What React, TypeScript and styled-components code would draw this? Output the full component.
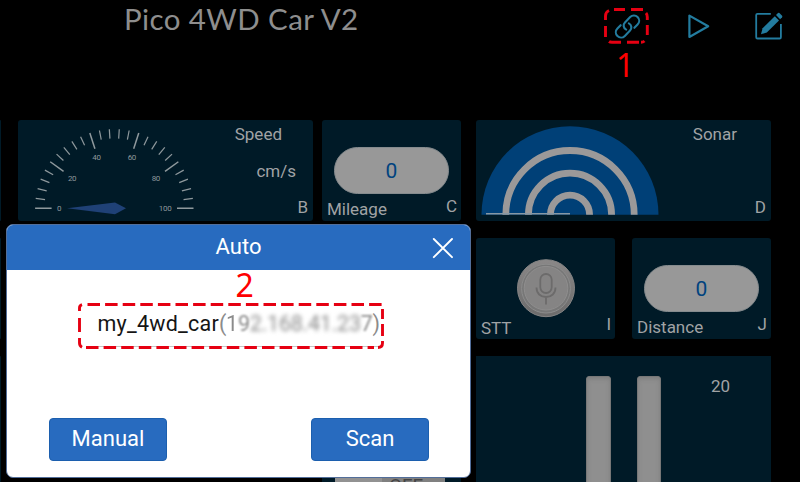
import React from "react";
import styled, { createGlobalStyle } from "styled-components";

const GlobalStyle = createGlobalStyle`
  html, body { margin: 0; background: #000; }
  * { box-sizing: border-box; }
`;

const Screen = styled.div`
  position: relative;
  width: 800px;
  height: 482px;
  overflow: hidden;
  background: #000;
  color: #a0a3a5;
  font-family: Roboto, "Liberation Sans", sans-serif;
`;

const Header = styled.header`
  display: flex;
  align-items: flex-start;
  height: 120px;
  padding-left: 124px;
`;

const Title = styled.h1`
  margin: 0;
  width: 481px;
  font: 400 29.5px/38px Lato, sans-serif;
  letter-spacing: 0.4px;
  color: #8e8e8e;
`;

const Toolbar = styled.nav`
  display: flex;
  align-items: center;
  height: 52px;
`;

const ToolButton = styled.button<{ $gap?: number }>`
  display: flex;
  align-items: center;
  justify-content: center;
  width: 44px;
  height: 44px;
  margin: 0 0 0 ${(p) => p.$gap ?? 0}px;
  padding: 0;
  border: 0;
  background: none;
  color: #237c9f;
`;

const Dashboard = styled.main`
  display: flex;
  height: 362px;
`;

const Column = styled.section<{ $width: number; $gap?: number }>`
  display: flex;
  flex-direction: column;
  gap: 17px;
  flex: none;
  width: ${(p) => p.$width}px;
  margin-left: ${(p) => p.$gap ?? 0}px;
`;

const Row = styled.div`
  display: flex;
  gap: 17px;
`;

const Card = styled.article<{ $height?: number; $square?: boolean; $width?: number }>`
  display: flex;
  flex: none;
  width: ${(p) => (p.$width ? `${p.$width}px` : "100%")};
  height: ${(p) => p.$height ?? 101}px;
  border-radius: ${(p) => (p.$square ? 0 : 3)}px;
  background: #001a27;
  overflow: hidden;
`;

const EdgeCard = styled(Card)`
  border-radius: 0 2px 2px 0;
`;

const Spacer = styled.div`
  height: 101px;
`;

const StackCard = styled(Card)`
  flex-direction: column;
  justify-content: space-between;
`;

const Side = styled.div`
  display: flex;
  flex: 1;
  flex-direction: column;
  align-items: flex-end;
  justify-content: space-between;
  padding: 4px 5px 4px 0;
`;

const Label = styled.span<{ $right?: number; $drop?: number }>`
  font-size: 17px;
  line-height: 20px;
  margin-right: ${(p) => p.$right ?? 0}px;
  margin-top: ${(p) => p.$drop ?? 0}px;
`;

const CardFooter = styled.footer`
  display: flex;
  justify-content: space-between;
  height: 24px;
  padding: 0 4px 0 5px;
`;

const Pill = styled.div`
  display: flex;
  align-items: center;
  justify-content: center;
  width: 115px;
  height: 47px;
  margin: 27px 0 0 12px;
  border: 1px solid #858b8e;
  border-radius: 24px;
  background: #989898;
  color: #00437f;
  font-size: 21px;
`;

const KnobSlot = styled.div`
  display: flex;
  justify-content: center;
  height: 77px;
  padding-top: 20px;
`;

const Tracks = styled.div`
  display: flex;
  gap: 26px;
  padding: 20px 0 0 110px;
`;

const Track = styled.div`
  width: 24.5px;
  height: 140px;
  border: 1px solid #777;
  border-radius: 3px;
  background: #8f8f8f;
  box-shadow: inset 0 2px 4px #7e7e7e;
`;

const TrackValue = styled.span`
  margin: 19px 0 0 50px;
  font-size: 17px;
  line-height: 22px;
`;

const Toggle = styled.div`
  align-self: flex-end;
  display: flex;
  justify-content: flex-end;
  width: 110px;
  height: 14px;
  margin: 0 0 -8px 13px;
  padding-right: 22px;
  background: linear-gradient(90deg, #929292 43%, #808080 43%);
  color: #444;
  font-size: 19px;
  line-height: 19px;
`;

const Dialog = styled.div`
  position: absolute;
  left: 6px;
  top: 224px;
  display: flex;
  flex-direction: column;
  width: 465px;
  height: 254px;
  border: 1px solid #526e9a;
  border-radius: 7px;
  background: #fff;
  overflow: hidden;
`;

const DialogHeader = styled.div`
  display: grid;
  grid-template-columns: 54px 1fr 54px;
  align-items: center;
  justify-items: center;
  flex: none;
  height: 45px;
  background: #286bbf;
  color: #fff;
`;

const DialogTitle = styled.h2`
  grid-column: 2;
  margin: 0;
  text-align: center;
  font-size: 22px;
  font-weight: 400;
  line-height: 42px;
  padding-bottom: 2px;
`;

const Device = styled.div`
  display: flex;
  height: 36px;
  margin: 41px 87px 0 85px;
  padding-left: 5.5px;
  border-bottom: 1px solid #c4c4c4;
  color: #151515;
  font-size: 21.5px;
  line-height: 26px;
  white-space: pre;
`;

const DeviceName = styled.span`
  width: 121.5px;
  letter-spacing: 0.25px;
`;

const Address = styled.span`
  display: flex;
  color: #8b8b8b;
  letter-spacing: -0.25px;
`;

const Blurred = styled.span<{ $amount: number }>`
  filter: blur(${(p) => p.$amount}px);
`;

const Actions = styled.div`
  display: flex;
  justify-content: space-between;
  margin: auto 41px 16px 42px;
`;

const Action = styled.button`
  width: 118px;
  height: 43px;
  padding: 0 0 2px;
  border: 1px solid #1c5fae;
  border-radius: 4px;
  background: #286bbf;
  color: #fff;
  font: 400 22px Roboto, sans-serif;
`;

const Callouts = styled.svg`
  position: absolute;
  left: 0;
  top: 0;
  pointer-events: none;
`;

const CalloutNumber = styled.span<{ $x: number; $y: number }>`
  position: absolute;
  left: ${(p) => p.$x}px;
  top: ${(p) => p.$y}px;
  color: #f00;
  font: 400 32px/32px "Noto Sans", sans-serif;
`;

const ticks = Array.from({ length: 26 }, (_, i) => i);
const gaugeLabels: [string, number, number][] = [
  ["0", 41.3, 91.3], ["20", 54.2, 61.2], ["40", 78.6, 40.2],
  ["60", 114, 40.2], ["80", 138, 61.2], ["100", 147.2, 91.3],
];

const Gauge = () => (
  <svg width="190" height="101">
    {ticks.map((i) => {
      const a = (i * 7.2 * Math.PI) / 180;
      const inner = i % 5 === 0 ? 62.7 : 69.8;
      return (
        <line
          key={i}
          x1={96.3 - 79.2 * Math.cos(a)}
          y1={88.3 - 79.2 * Math.sin(a)}
          x2={96.3 - inner * Math.cos(a)}
          y2={88.3 - inner * Math.sin(a)}
          stroke="#8f999d"
          strokeWidth={i % 5 === 0 ? 1.5 : 1.2}
        />
      );
    })}
    <path d="M49 88.3 97 82.6 108 88.3 97 94.2Z" fill="#1f4176" />
    {gaugeLabels.map(([t, x, y]) => (
      <text key={t} x={x} y={y} fontSize="8" textAnchor="middle" fill="#8d979b" textLength={t.length * 4.3}>{t}</text>
    ))}
  </svg>
);

const Sonar = () => (
  <svg width="190" height="101">
    <path d="M5.5 94.7a88.5 88.5 0 0 1 177 0Z" fill="#004077" />
    {[64.2, 41.6, 19.6].map((r) => (
      <path key={r} d={`M${94 - r} 94.7a${r} ${r} 0 0 1 ${2 * r} 0`} fill="none" stroke="#9b9999" strokeWidth="6.8" />
    ))}
    <path d="M10 93.8H94" stroke="#8798a4" strokeWidth="1.6" />
  </svg>
);

const MicKnob = () => (
  <svg width="60" height="60">
    <defs>
      <linearGradient id="rim" x2="0" y2="1">
        <stop stopColor="#8a8888" />
        <stop offset="1" stopColor="#6c6b6b" />
      </linearGradient>
    </defs>
    <circle cx="30" cy="30.2" r="28.5" fill="url(#rim)" stroke="#858484" />
    <circle cx="30" cy="30.6" r="24.4" fill="#777" stroke="#8c8c8c" strokeWidth="1" />
    <circle cx="30" cy="30.2" r="21.8" fill="#858484" stroke="#8f8e8e" />
    <g fill="none" stroke="#6c6b6b" strokeWidth="1.8">
      <rect x="24.3" y="16" width="11.4" height="19" rx="5.7" />
      <path d="M20.5 29.5c0 6 4 9.5 9.5 9.5s9.5-3.5 9.5-9.5M30 39V46.5" />
    </g>
  </svg>
);

const LinkIcon = () => (
  <svg width="31" height="31" viewBox="0 0 28 28" fill="none" stroke="currentColor" strokeWidth="1.9" strokeLinecap="round">
    <path d="M15.2 11.2c2.6 1.3 3 4.6 1.1 6.5l-4.7 4.8c-1.9 1.9-4.8 2-6.7.1s-1.9-4.9 0-6.8l2.9-3" />
    <path d="M12.8 16.8c-2.6-1.3-3-4.6-1.1-6.5l4.7-4.8c1.9-1.9 4.8-2 6.7-.1s1.9 4.9 0 6.8l-2.9 3" />
  </svg>
);

const PlayIcon = () => (
  <svg width="24" height="28" viewBox="0 0 24 28" fill="none" stroke="currentColor" strokeWidth="2.2" strokeLinejoin="round">
    <path d="M2.4 3.6V25L21.2 14.3Z" />
  </svg>
);

const EditIcon = () => (
  <svg width="30" height="30" viewBox="0 0 30 30">
    <path d="M16.8 2.8H3.5Q2.2 2.8 2.2 4.1V26.2Q2.2 27.5 3.5 27.5H25.6Q26.9 27.5 26.9 26.2V13" fill="none" stroke="currentColor" strokeWidth="1.8" />
    <path d="M7 23.2 8.6 17.3 20.8 5.2 25 9.4 12.8 21.5Z" fill="currentColor" />
    <path d="M22 4 24 2.1Q24.7 1.5 25.4 2.1L28.1 4.8Q28.7 5.5 28.1 6.2L26.1 8.2Z" fill="currentColor" />
  </svg>
);

const CloseIcon = () => (
  <svg width="22" height="22" stroke="#fff" strokeWidth="1.9" strokeLinecap="round">
    <path d="M1.8 2 20 20.2M20 2 1.8 20.2" />
  </svg>
);

export default function App() {
  return (
    <Screen>
      <GlobalStyle />
      <Header>
        <Title>Pico 4WD Car V2</Title>
        <Toolbar>
          <ToolButton aria-label="Connect"><LinkIcon /></ToolButton>
          <ToolButton $gap={28} aria-label="Play"><PlayIcon /></ToolButton>
          <ToolButton $gap={26} aria-label="Edit"><EditIcon /></ToolButton>
        </Toolbar>
      </Header>

      <Dashboard>
        <Column $width={1}>
          <EdgeCard />
          <EdgeCard />
          <EdgeCard $height={126} />
        </Column>
        <Column $width={295} $gap={17}>
          <Card>
            <Gauge />
            <Side>
              <Label $right={26}>Speed</Label>
              <Label $right={12}>cm/s</Label>
              <Label>B</Label>
            </Side>
          </Card>
        </Column>
        <Column $width={139} $gap={9}>
          <StackCard>
            <Pill>0</Pill>
            <CardFooter><Label $drop={2}>Mileage</Label><Label $drop={-1}>C</Label></CardFooter>
          </StackCard>
          <Spacer />
          <Card $height={126} $square><Toggle>OFF</Toggle></Card>
        </Column>
        <Column $width={295} $gap={15}>
          <Card>
            <Sonar />
            <Side>
              <Label $right={29}>Sonar</Label>
              <Label>D</Label>
            </Side>
          </Card>
          <Row>
            <StackCard $width={139}>
              <KnobSlot><MicKnob /></KnobSlot>
              <CardFooter><Label $drop={3}>STT</Label><Label $drop={-1}>I</Label></CardFooter>
            </StackCard>
            <StackCard $width={139}>
              <Pill>0</Pill>
              <CardFooter><Label $drop={2}>Distance</Label><Label $drop={-1}>J</Label></CardFooter>
            </StackCard>
          </Row>
          <Card $height={126} $square>
            <Tracks><Track /><Track /></Tracks>
            <TrackValue>20</TrackValue>
          </Card>
        </Column>
      </Dashboard>

      <Dialog role="dialog">
        <DialogHeader>
          <DialogTitle>Auto</DialogTitle>
          <CloseIcon />
        </DialogHeader>
        <Device>
          <DeviceName>my_4wd_car</DeviceName>
          <Address>
            <span>(</span>
            <Blurred $amount={0.6}>1</Blurred>
            <Blurred $amount={1.1}>9</Blurred>
            <Blurred $amount={2}>2.168.41.23</Blurred>
            <Blurred $amount={0.8}>7</Blurred>
            <span>)</span>
          </Address>
        </Device>
        <Actions>
          <Action>Manual</Action>
          <Action>Scan</Action>
        </Actions>
      </Dialog>

      <Callouts width="800" height="482" fill="none" stroke="#e60012" strokeWidth="2.9">
        <path d="M614 9.5H625M631 9.5H643M646 13Q647.3 14.5 647.3 17V20M647.3 25V35M644.5 41Q643 42.3 641 42.3M639 42.3H627M621 42.3H612Q610 42.3 609 41.5M605.5 37V26M605.5 20V16Q605.5 12 609 10.5" />
        <path d="M87.5 304.5H382" strokeDasharray="12.5 5.1" />
        <path d="M86 347.5H374" strokeDasharray="12.5 5.1" />
        <path d="M382.5 309V319M382.5 324V336M382.5 341V343Q382.5 347.5 378 347.5M79.5 311V308Q79.5 305.5 82 304.7M79.5 318V332M79.5 338V343Q79.5 346 82 347.3" />
      </Callouts>
      <CalloutNumber $x={616} $y={49}>1</CalloutNumber>
      <CalloutNumber $x={235.5} $y={269}>2</CalloutNumber>
    </Screen>
  );
}
